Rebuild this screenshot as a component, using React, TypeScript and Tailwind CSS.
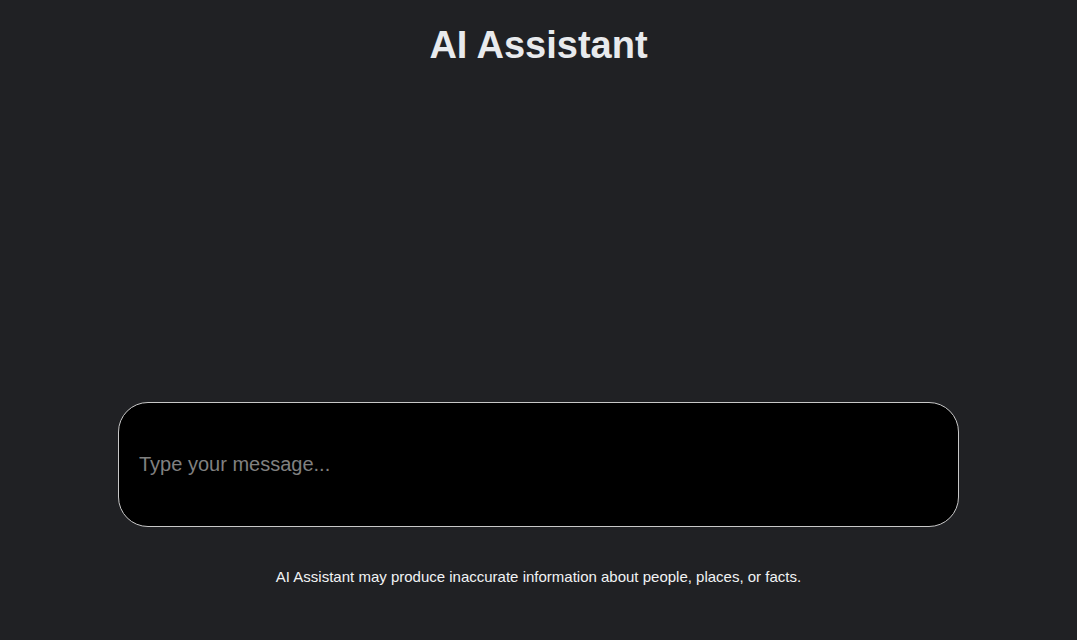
import React from "react";

export default function App() {
  return (
    <div
      className="flex h-screen w-full flex-col bg-[#202124] text-[#e8eaed]"
      style={{ fontFamily: '"Liberation Sans", Arial, sans-serif' }}
    >
      <h1 className="pt-[24px] text-center text-[38px] font-bold leading-[42px] text-[#e8eaed]">
        AI Assistant
      </h1>
      <div className="flex-1" />
      <div className="mx-auto flex h-[125px] w-[841px] items-center rounded-[30px] border border-[#c8c8c8] bg-black px-5 pb-[2px]">
        <input
          type="text"
          placeholder="Type your message..."
          className="w-full bg-transparent text-[20px] text-white outline-none placeholder:text-[#808080]"
        />
      </div>
      <p className="mt-[40px] mb-[53px] text-center text-[15px] leading-[20px] text-[#f1f3f4]">
        AI Assistant may produce inaccurate information about people, places, or facts.
      </p>
    </div>
  );
}
